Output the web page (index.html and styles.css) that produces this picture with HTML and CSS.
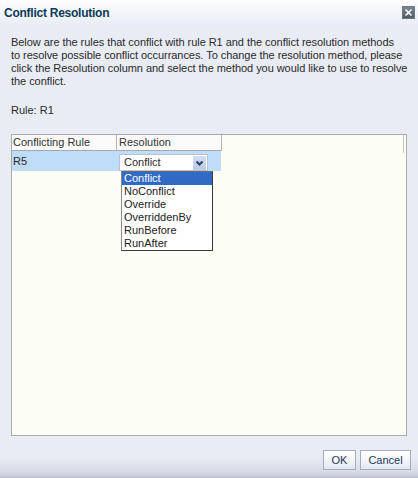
FILE: index.html
```html
<!DOCTYPE html>
<html>
<head>
<meta charset="utf-8">
<link rel="stylesheet" href="styles.css">
</head>
<body>
<div class="dialog">
  <div class="titlebar">
    <span class="title">Conflict Resolution</span>
    <span class="close"><svg width="13" height="13" viewBox="0 0 13 13"><path d="M3.5 3.5 L9.5 9.5 M9.5 3.5 L3.5 9.5" stroke="#fff" stroke-width="1.6" fill="none"/></svg></span>
  </div>
  <div class="content">
    <p class="desc">Below are the rules that conflict with rule R1 and the conflict resolution methods<br>to resolve possible conflict occurrances. To change the resolution method, please<br>click the Resolution column and select the method you would like to use to resolve<br>the conflict.</p>
    <p class="rule">Rule: R1</p>
    <div class="grid">
      <div class="grid-head">
        <div class="th c1">Conflicting Rule</div>
        <div class="th c2">Resolution</div>
        <div class="th-fill"><span class="th-line"></span></div>
      </div>
      <div class="row">
        <div class="td c1">R5</div>
        <div class="td c2">
          <div class="select">
            <span class="sel-text">Conflict</span>
            <span class="arrow"><svg width="13" height="14" viewBox="0 0 13 14"><path d="M3.5 5.5 L6.5 8.5 L9.5 5.5" stroke="#2e4468" stroke-width="2.2" fill="none"/></svg></span>
          </div>
          <ul class="options">
            <li class="active">Conflict</li>
            <li>NoConflict</li>
            <li>Override</li>
            <li>OverriddenBy</li>
            <li>RunBefore</li>
            <li>RunAfter</li>
          </ul>
        </div>
      </div>
    </div>
  </div>
  <div class="footer">
    <button class="btn ok">OK</button>
    <button class="btn cancel">Cancel</button>
  </div>
</div>
</body>
</html>
```

FILE: styles.css
```css
html, body {
  margin: 0;
  padding: 0;
}
.dialog {
  width: 418px;
  height: 478px;
  display: flex;
  flex-direction: column;
  background: #e9ecf5;
  font-family: "Liberation Sans", Arial, sans-serif;
  font-size: 11px;
  color: #2a2a2a;
}
.titlebar {
  height: 26px;
  flex: none;
  display: flex;
  align-items: center;
  justify-content: space-between;
  padding: 0 3px 0 4px;
  background: linear-gradient(#fefefe, #f1f3f9 60%, #e9ecf5);
}
.title {
  font-weight: bold;
  font-size: 12px;
  letter-spacing: -0.25px;
  color: #0d3a58;
}
.close {
  width: 13px;
  height: 13px;
  margin-top: -2px;
  display: flex;
  background: linear-gradient(#7d8897, #4c5766);
  border-radius: 1px;
  box-shadow: inset 0 0 0 1px #6b7686;
}
.content {
  flex: 1;
  display: flex;
  flex-direction: column;
  padding: 0 11px;
}
.desc {
  margin: 10px 0 0;
  line-height: 13px;
  white-space: nowrap;
  letter-spacing: -0.05px;
}
.rule {
  margin: 16px 0 0;
  line-height: 13px;
}
.grid {
  margin-top: 17px;
  flex: 1;
  border: 1px solid #aaaaaa;
  background: #fcfdf5;
}
.grid-head {
  display: flex;
  height: 16px;
}
.th {
  box-sizing: border-box;
  width: 105px;
  height: 16px;
  line-height: 15px;
  padding-left: 1px;
  background: #fafafa;
  border-right: 1px solid #b4b4b4;
  border-bottom: 1px solid #a8a8a8;
  color: #333;
}
.c2 {
  padding-left: 2px;
}
.th-fill {
  flex: 1;
  display: flex;
  justify-content: flex-end;
  padding-right: 2px;
}
.th-line {
  width: 1px;
  height: 18px;
  background: #c4c4c4;
}
.row {
  display: flex;
  height: 20px;
}
.td {
  box-sizing: border-box;
  width: 105px;
  height: 20px;
  line-height: 20px;
  padding-left: 1px;
  background: #bfdcf9;
}
.td.c1 {
  border-right: 1px solid #bfdcf9;
}
.td.c2 {
  position: relative;
  width: 104px;
  padding-top: 3px;
  padding-left: 2px;
}
.select {
  box-sizing: border-box;
  width: 89px;
  height: 17px;
  display: flex;
  align-items: center;
  justify-content: space-between;
  background: #fff;
  border: 1px solid #b6c2d4;
  padding: 0 1px 0 4px;
  line-height: 15px;
}
.arrow {
  display: flex;
  width: 13px;
  height: 14px;
  background: linear-gradient(#d3def3, #bccbea);
}
.options {
  position: absolute;
  left: 4px;
  top: 20px;
  width: 92px;
  box-sizing: border-box;
  margin: 0;
  padding: 0;
  list-style: none;
  background: #fff;
  border: 1px solid #3a3a3a;
  border-left-color: #8a8a8a;
  border-top-color: #6a6a6a;
  z-index: 2;
}
.options li {
  height: 13px;
  line-height: 13px;
  padding-left: 2px;
  color: #222;
}
.options li.active {
  background: #316ac5;
  color: #fff;
}
.footer {
  flex: none;
  height: 42px;
  box-sizing: border-box;
  display: flex;
  justify-content: flex-end;
  align-items: flex-start;
  gap: 4px;
  padding: 14px 7px 0 0;
  background: linear-gradient(#e9ecf5 0, #e9ecf5 22px, #d5dae5 36px, #c3c9d6 41px, #aeb5c2 42px);
}
.btn {
  height: 20px;
  box-sizing: border-box;
  border: 1px solid #a3adbb;
  background: linear-gradient(#ffffff, #f4f5f8 50%, #e2e6ee);
  font-family: "Liberation Sans", Arial, sans-serif;
  font-size: 11px;
  color: #1d3a58;
  padding: 0;
  line-height: 18px;
}
.ok {
  width: 33px;
}
.cancel {
  width: 51px;
}
```
